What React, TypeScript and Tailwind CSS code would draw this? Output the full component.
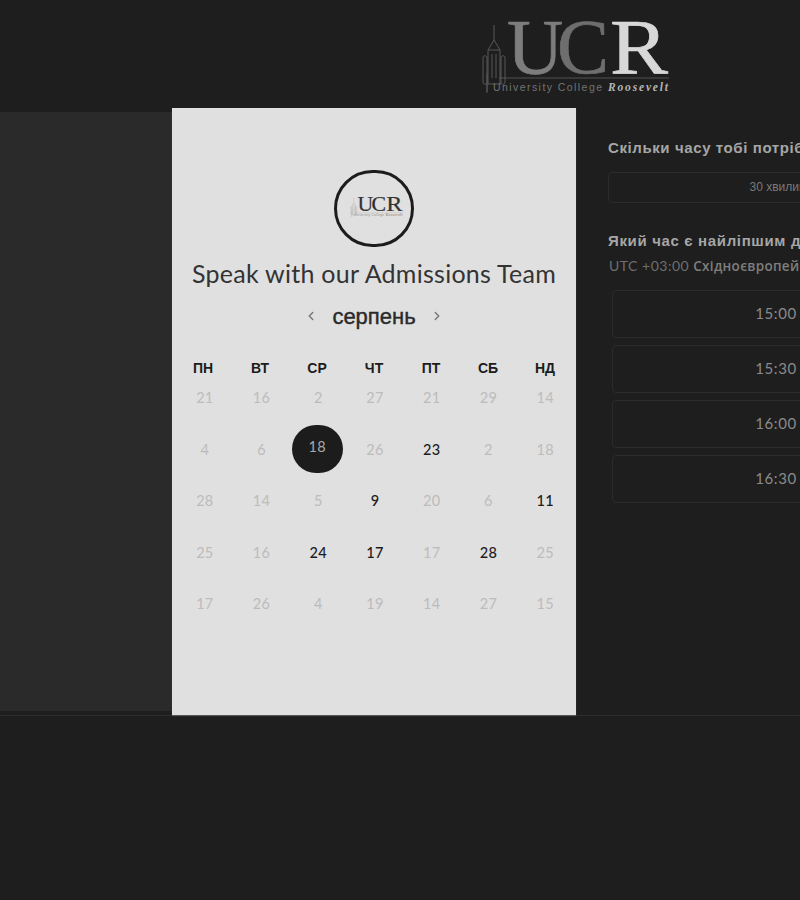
import { ChevronLeft, ChevronRight } from 'lucide-react'

const weekDays = ['ПН', 'ВТ', 'СР', 'ЧТ', 'ПТ', 'СБ', 'НД']

// [label, state] - a = available, s = selected, anything else is muted
const days: [number, string?][] = [
  [21], [16], [2], [27], [21], [29], [14],
  [4], [6], [18, 's'], [26], [23, 'a'], [2], [18],
  [28], [14], [5], [9, 'a'], [20], [6], [11, 'a'],
  [25], [16], [24, 'a'], [17, 'a'], [17], [28, 'a'], [25],
  [17], [26], [4], [19], [14], [27], [15],
]

const times = ['15:00', '15:30', '16:00', '16:30']

function Logo({ className, u, c, r, sub, script, line }: { className: string; u: string; c: string; r: string; sub: string; script: string; line: string }) {
  return (
    <svg viewBox="0 -12 200 102" className={className} fill="none">
      {/* tower */}
      <g stroke={line} strokeWidth="0.9">
        <path d="M17 13V28M17 28L11 38V72M17 28L23 38V72M11 38H23M15 42V66M19 42V66" />
        <path d="M6 46V70C6 73 10 73 10 70V46C10 43 6 43 6 46Z" />
        <path d="M24 46V70C24 73 28 73 28 70V46C28 43 24 43 24 46Z" />
        <path d="M10 60H11M23 60H24M10 72H24M10 72V80" />
      </g>
      <path d="M22 66H192M10 62V81" stroke={line} strokeWidth="0.8" />
      <text x="30" y="61" fontFamily="'Liberation Serif', serif" fontSize="78" fill={u} stroke={u} strokeWidth="0.7">U</text>
      <text x="80" y="61" fontFamily="'Liberation Serif', serif" fontSize="78" fill={c} stroke={c} strokeWidth="0.7">C</text>
      <text x="133" y="61" fontFamily="'Liberation Serif', serif" fontSize="78" fill={r} stroke={r} strokeWidth="0.7" textLength="58" lengthAdjust="spacingAndGlyphs">R</text>
      <text x="16" y="78.5" fontFamily="'Liberation Sans', sans-serif" fontSize="10.5" fill={sub} textLength="109">University College</text>
      <text x="131" y="78.5" fontFamily="'Liberation Serif', serif" fontSize="11.5" fontStyle="italic" fontWeight="700" fill={script} textLength="60">Roosevelt</text>
    </svg>
  )
}

export default function App() {
  return (
    <div className="w-[800px] h-[900px] overflow-hidden bg-[#1e1e1e] font-['Lato',sans-serif]">
      <header className="h-[108px] pl-[477px]">
        <Logo className="w-[200px] h-[102px]" u="#7d7d7d" c="#6e6e6e" r="#d8d8d8" sub="#737373" script="#b5b5b5" line="#5e5e5e" />
      </header>

      <main className="flex h-[608px] border-b border-[#2d2d2d]">
        <aside className="w-[172px] shrink-0 my-[4px] bg-[#2a2a2a]" />

        {/* calendar card */}
        <section className="w-[404px] shrink-0 h-[607px] bg-[#e0e0e0] shadow-[0_1px_1px_#555555] flex flex-col items-center pt-[62px]">
          <div className="w-[80px] h-[77px] rounded-full border-[3px] border-[#1c1c1c] flex items-center justify-center">
            <Logo className="w-[56px] h-[28.5px] ml-[5px] mb-[7px]" u="#333333" c="#2b2b2b" r="#333333" sub="#888888" script="#888888" line="#999999" />
          </div>
          <h1 className="mt-[11px] h-[30px] leading-[30px] text-[25px] tracking-[0.27px] text-[#333333] whitespace-nowrap">Speak with our Admissions Team</h1>
          <div className="mt-[15px] h-[26px] flex items-center gap-[12px] text-[#777777]">
            <ChevronLeft size={14} strokeWidth={2.5} />
            <span className="w-[88px] text-center text-[22px] text-[#2a2a2a] font-['Liberation_Sans',sans-serif] [-webkit-text-stroke:0.4px_#2a2a2a]">серпень</span>
            <ChevronRight size={14} strokeWidth={2.5} />
          </div>

          <div className="mt-[29px] w-[399px] grid grid-cols-7 text-center">
            {weekDays.map((d) => (
              <div key={d} className="h-[20px] leading-[20px] text-[14px] font-bold text-[#1c1c1c] font-['Liberation_Sans',sans-serif]">{d}</div>
            ))}
          </div>
          <div className="mt-[5px] w-[399px] pl-[2px] grid grid-cols-7 gap-y-[21.5px] text-[14.5px] tracking-[0.3px]">
            {days.map(([n, state], i) => (
              <div key={i} className="h-[30px] flex items-center justify-center">
                {state === 's' ? (
                  <div className="w-[51px] h-[48px] shrink-0 mb-[2px] -ml-[2px] rounded-full bg-[#1c1c1c] text-[#a8a8a8] flex items-center justify-center pb-[3px]">{n}</div>
                ) : (
                  <span className={state === 'a' ? 'text-[#1c1c1c] font-medium' : 'text-[#bcbcbc]'}>{n}</span>
                )}
              </div>
            ))}
          </div>
        </section>

        {/* right column runs off the page */}
        <section className="w-[400px] shrink-0 pl-[32px] pt-[30px]">
          <h2 className="h-[20px] leading-[20px] text-[15px] font-bold tracking-[0.6px] text-[#a6a6a6] whitespace-nowrap font-['Liberation_Sans',sans-serif]">Скільки часу тобі потрібно?</h2>
          <div className="mt-[14px] w-[339px] h-[31px] rounded-[4px] border border-[#2b2b2b] flex items-center justify-center pb-[1px] text-[12px] text-[#7a7a7a] font-['Liberation_Sans',sans-serif]">30 хвилин</div>
          <h2 className="mt-[28px] h-[20px] leading-[20px] text-[15px] font-bold tracking-[0.65px] text-[#a6a6a6] whitespace-nowrap font-['Liberation_Sans',sans-serif]">Який час є найліпшим для тебе?</h2>
          <p className="mt-[5px] ml-[1px] h-[20px] leading-[20px] text-[14px] tracking-[0.5px] text-[#6e6e6e] whitespace-nowrap">
            UTC +03:00 <span className="font-semibold tracking-[0.3px] text-[#7e7e7e] font-['Open_Sans',sans-serif] text-[13.5px]">Східноєвропейський час</span>
          </p>
          <div className="mt-[14px] ml-[4px] w-[328px] flex flex-col gap-[7px]">
            {times.map((t) => (
              <div key={t} className="h-[48px] rounded-[4px] border border-[#2b2b2b] flex items-center justify-center pb-[2px] text-[15px] tracking-[0.6px] text-[#8a8a8a]">{t}</div>
            ))}
          </div>
        </section>
      </main>
    </div>
  )
}
